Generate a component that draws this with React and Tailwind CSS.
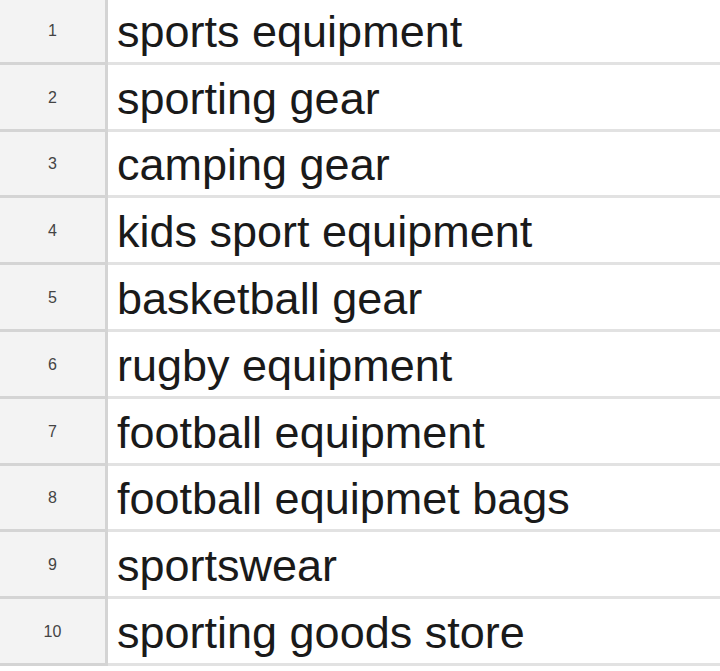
const ROWS = [
  'sports equipment',
  'sporting gear',
  'camping gear',
  'kids sport equipment',
  'basketball gear',
  'rugby equipment',
  'football equipment',
  'football equipmet bags',
  'sportswear',
  'sporting goods store',
];

export default function App() {
  return (
    <div className="h-[671px] w-[720px] overflow-hidden bg-white font-['Liberation_Sans',Arial,sans-serif]">
      <div className="-mt-[2px] flex flex-col">
        {ROWS.map((label, i) => (
          <div key={i} className="flex h-[66.8px] shrink-0">
            <div className="flex w-[108px] shrink-0 items-center justify-center border-b-[3px] border-r-[3px] border-[#d4d4d4] bg-[#f3f3f3] pt-[2px] text-[16px] text-[#444]">
              {i + 1}
            </div>
            <div className="flex flex-1 items-center border-b-[3px] border-[#e2e2e2] pl-[9px] pt-[3px] text-[45px] leading-none text-[#1a1a1a]">
              {label}
            </div>
          </div>
        ))}
      </div>
    </div>
  );
}
